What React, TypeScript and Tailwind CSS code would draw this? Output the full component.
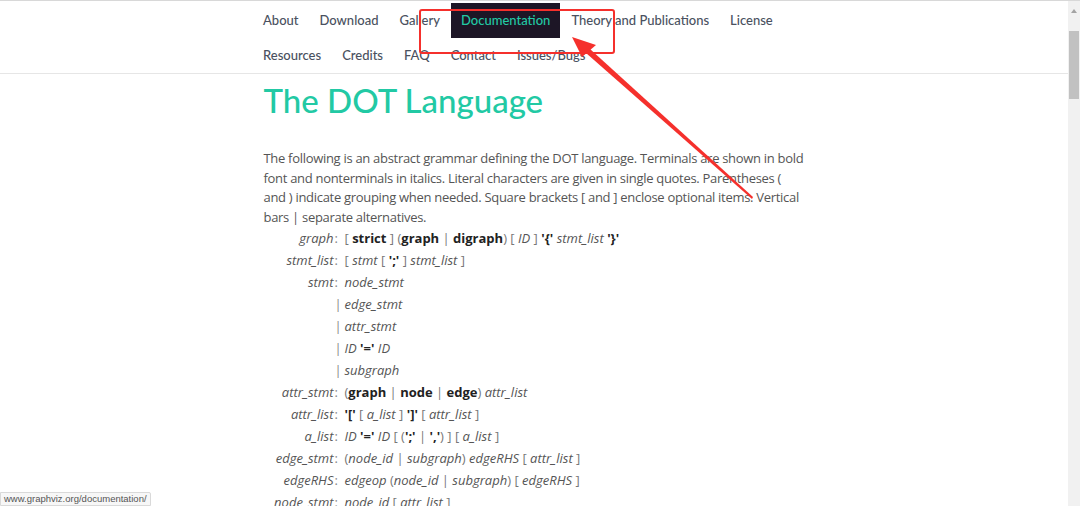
import * as React from "react";

const navRow1 = ["About", "Download", "Gallery", "Documentation", "Theory and Publications", "License"];
const navRow2 = ["Resources", "Credits", "FAQ", "Contact", "Issues/Bugs"];

const I = ({ children }: { children: React.ReactNode }) => <i className="text-[#555]">{children}</i>;
const B = ({ children }: { children: React.ReactNode }) => <b className="font-bold text-[#222]">{children}</b>;

type Row = { name: string; sep: string; body: React.ReactNode };

const rows: Row[] = [
  {
    name: "graph",
    sep: ":",
    body: (
      <>
        [ <B>strict</B> ] (<B>graph</B> | <B>digraph</B>) [ <I>ID</I> ] <B>{"'{'"}</B> <I>stmt_list</I> <B>{"'}'"}</B>
      </>
    ),
  },
  {
    name: "stmt_list",
    sep: ":",
    body: (
      <>
        [ <I>stmt</I> [ <B>';'</B> ] <I>stmt_list</I> ]
      </>
    ),
  },
  { name: "stmt", sep: ":", body: <I>node_stmt</I> },
  { name: "", sep: "|", body: <I>edge_stmt</I> },
  { name: "", sep: "|", body: <I>attr_stmt</I> },
  {
    name: "",
    sep: "|",
    body: (
      <>
        <I>ID</I> <B>'='</B> <I>ID</I>
      </>
    ),
  },
  { name: "", sep: "|", body: <I>subgraph</I> },
  {
    name: "attr_stmt",
    sep: ":",
    body: (
      <>
        (<B>graph</B> | <B>node</B> | <B>edge</B>) <I>attr_list</I>
      </>
    ),
  },
  {
    name: "attr_list",
    sep: ":",
    body: (
      <>
        <B>'['</B> [ <I>a_list</I> ] <B>']'</B> [ <I>attr_list</I> ]
      </>
    ),
  },
  {
    name: "a_list",
    sep: ":",
    body: (
      <>
        <I>ID</I> <B>'='</B> <I>ID</I> [ (<B>';'</B> | <B>','</B>) ] [ <I>a_list</I> ]
      </>
    ),
  },
  {
    name: "edge_stmt",
    sep: ":",
    body: (
      <>
        (<I>node_id</I> | <I>subgraph</I>) <I>edgeRHS</I> [ <I>attr_list</I> ]
      </>
    ),
  },
  {
    name: "edgeRHS",
    sep: ":",
    body: (
      <>
        <I>edgeop</I> (<I>node_id</I> | <I>subgraph</I>) [ <I>edgeRHS</I> ]
      </>
    ),
  },
  {
    name: "node_stmt",
    sep: ":",
    body: (
      <>
        <I>node_id</I> [ <I>attr_list</I> ]
      </>
    ),
  },
];

function NavItem({ label }: { label: string }) {
  const active = label === "Documentation";
  return (
    <a
      className={
        active
          ? "px-[10px] h-[35px] flex items-center bg-[#1d1626] text-[#22c9a4]"
          : "px-[10px] h-[35px] flex items-center text-[#4a5160]"
      }
    >
      {label}
    </a>
  );
}

export default function App() {
  return (
    <div className="relative h-[506px] w-[1080px] overflow-hidden bg-white flex">
      <div className="flex-1 flex flex-col border-t border-[#d8d8d8]">
        {/* header nav */}
        <header className="border-b border-[#e6e6e6] pt-[2px] pb-[1px]">
          <nav className="w-[564px] mx-auto font-['Lato',sans-serif] text-[13px] font-medium">
            <div className="flex gap-[1px] h-[35px] pl-[1px]">
              {navRow1.map((n) => (
                <NavItem key={n} label={n} />
              ))}
            </div>
            <div className="flex gap-[1px] h-[34px] pl-[1px]">
              {navRow2.map((n) => (
                <NavItem key={n} label={n} />
              ))}
            </div>
          </nav>
        </header>

        <main className="w-[541px] mx-auto font-['Open_Sans',sans-serif] text-[#555]">
          <h1 className="mt-[6px] font-['Lato',sans-serif] text-[33px] leading-[40px] text-[#22c9a4] font-medium">
            The DOT Language
          </h1>
          <p className="mt-[29px] text-[13px] tracking-[-0.3px] leading-[19.5px]">
            The following is an abstract grammar defining the DOT language. Terminals are shown in bold font and
            nonterminals in italics. Literal characters are given in single quotes. Parentheses ( and ) indicate
            grouping when needed. Square brackets [ and ] enclose optional items. Vertical bars | separate
            alternatives.
          </p>
          <table className="mt-[1px] text-[13px]">
            <tbody>
              {rows.map((r, i) => (
                <tr key={i} className="h-[22px]">
                  <td className="w-[70px] text-right italic text-[#555] align-middle">{r.name}</td>
                  <td className="w-[10px] pl-[1px] text-[#888] align-middle">{r.sep}</td>
                  <td className="pl-[1px] text-[#777] align-middle whitespace-nowrap">{r.body}</td>
                </tr>
              ))}
            </tbody>
          </table>
        </main>
      </div>

      {/* scrollbar */}
      <div className="w-[12px] bg-[#f1f1f1] flex flex-col items-center border-t border-[#d8d8d8]">
        <div className="mt-[8px] w-0 h-0 border-l-[3px] border-r-[3px] border-b-[4px] border-l-transparent border-r-transparent border-b-[#a3a3a3]" />
        <div className="mt-[18px] w-[10px] h-[68px] bg-[#c1c1c1]" />
      </div>

      {/* status bar */}
      <div className="absolute left-0 bottom-0 h-[14px] px-[3px] bg-[#f7f7f7] border border-[#d9d9d9] rounded-tr-[2px] font-['Liberation_Sans',sans-serif] text-[9.5px] leading-[12px] text-[#555]">
        www.graphviz.org/documentation/
      </div>

      {/* red annotation overlay */}
      <svg className="absolute left-0 top-0 pointer-events-none" width="1080" height="506">
        <rect x="420" y="10" width="194" height="43" rx="2" fill="none" stroke="#f5302c" strokeWidth="2" />
        <polygon points="752,199 753,197 590,49 586,53" fill="#f5302c" />
        <polygon points="572,37 596,45 582,57" fill="#f5302c" />
      </svg>
    </div>
  );
}
